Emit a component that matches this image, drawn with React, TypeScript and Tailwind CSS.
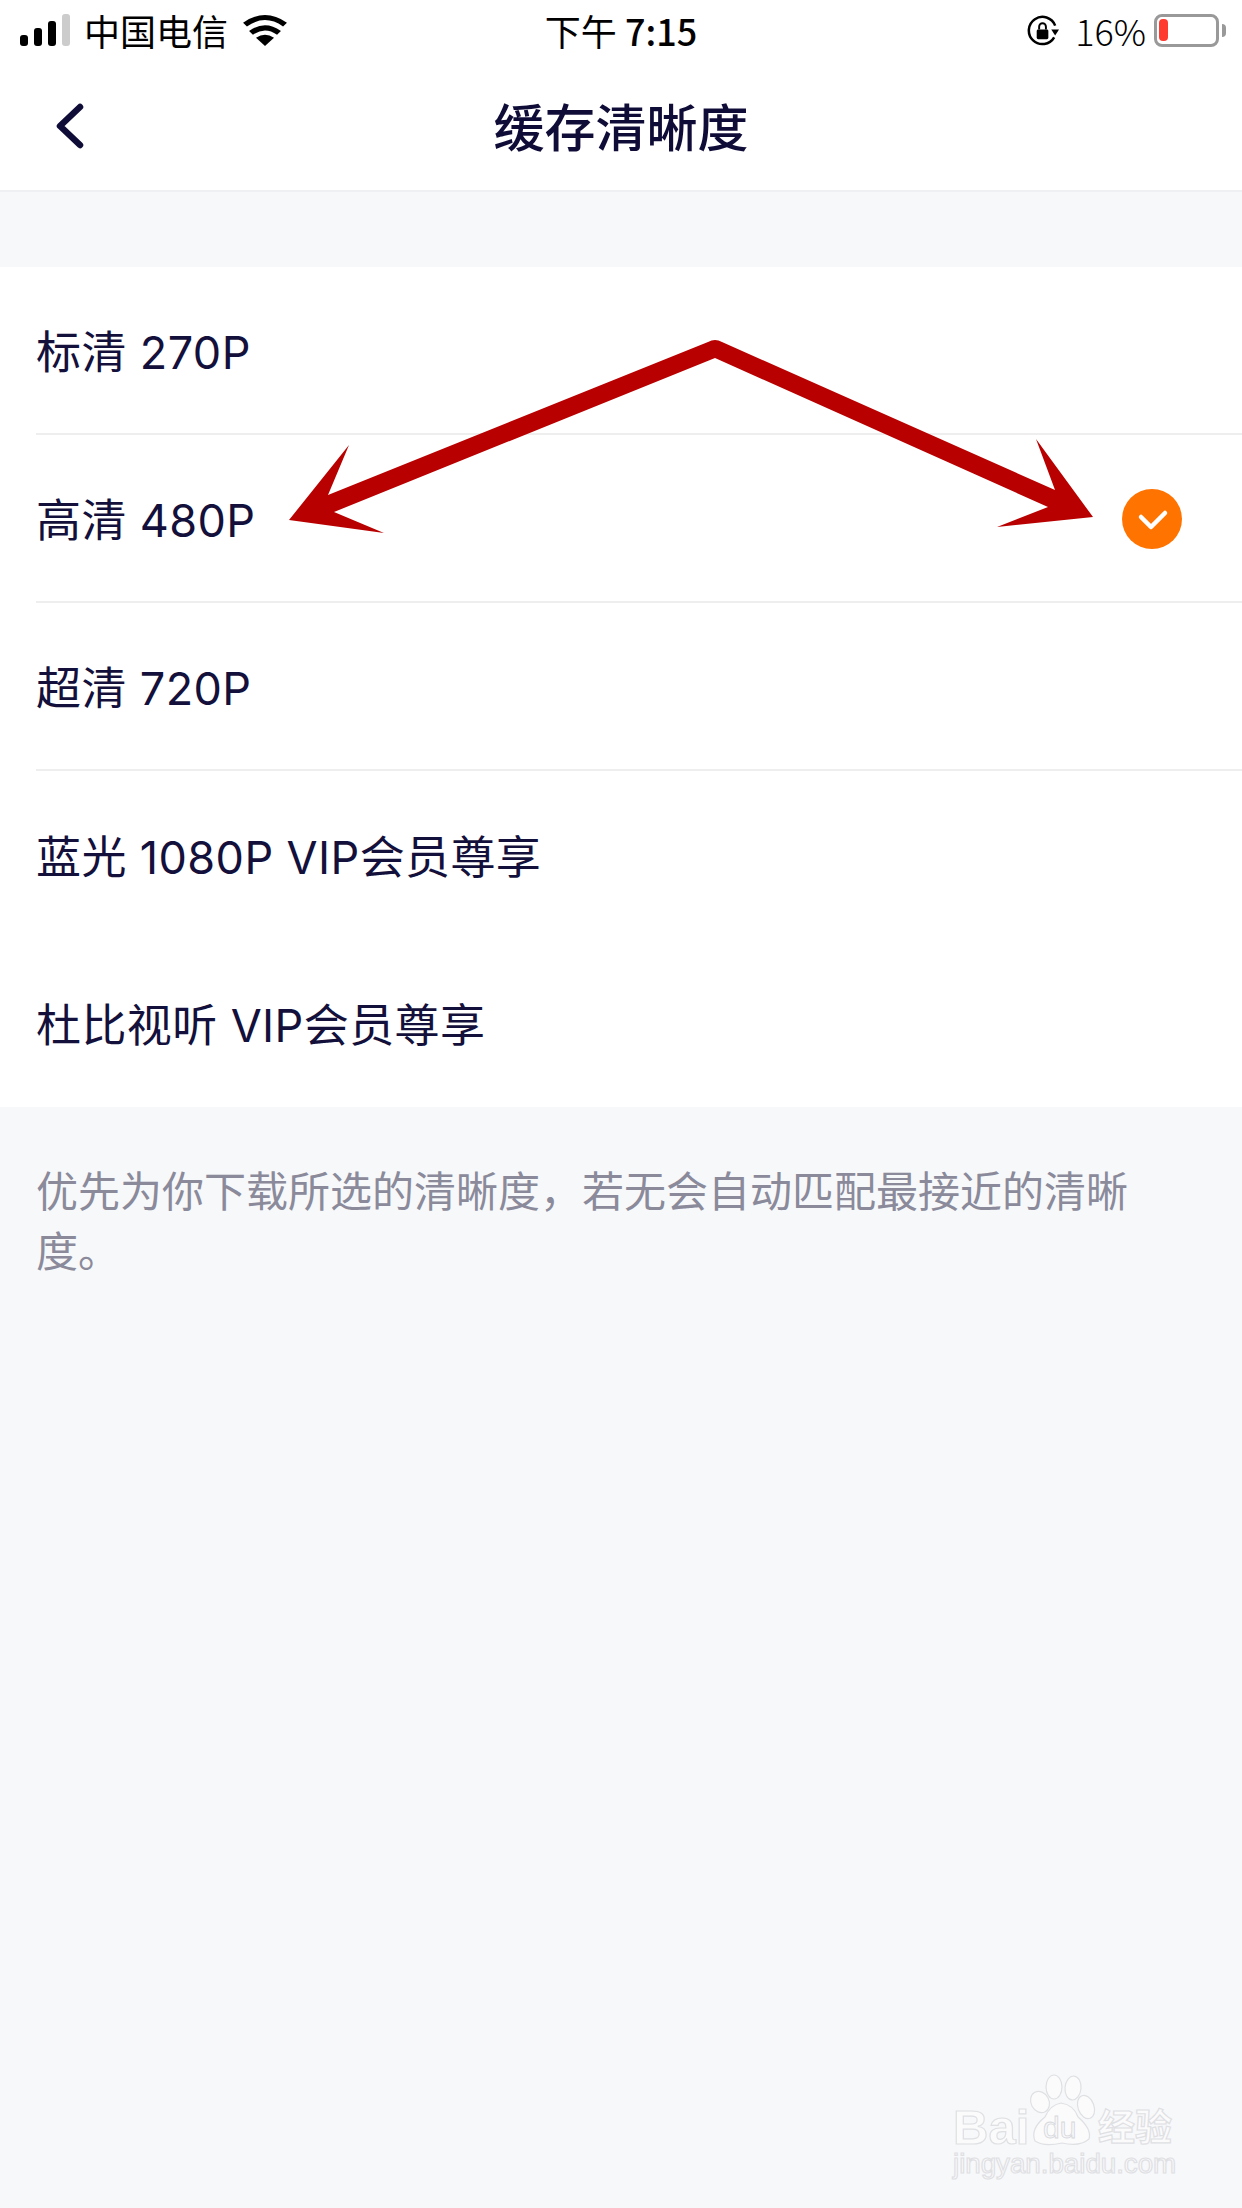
const options = [
  { label: "标清 270P" },
  { label: "高清 480P", selected: true },
  { label: "超清 720P" },
  { label: "蓝光 1080P VIP会员尊享", noLine: true },
  { label: "杜比视听 VIP会员尊享", noLine: true },
];

function StatusBar() {
  return (
    <div className="grid h-[60px] grid-cols-[1fr_auto_1fr] items-center text-black">
      <div className="flex items-center pl-[20px]">
        <svg width="51" height="32" viewBox="0 0 51 32">
          <rect x="0" y="21" width="8" height="11" rx="3" fill="#000" />
          <rect x="14" y="14" width="8" height="18" rx="3" fill="#000" />
          <rect x="28" y="7" width="8" height="25" rx="3" fill="#000" />
          <rect x="42" y="0" width="8" height="32" rx="3" fill="#ccc" />
        </svg>
        <span className="ml-[13px] text-[36px] leading-none">中国电信</span>
        <svg className="mb-[1px] ml-[14px]" width="46" height="33" viewBox="0 0 46 40" preserveAspectRatio="none">
          <path d="M23 40 L14 30 Q23 23 32 30 Z" fill="#000" />
          <path d="M9 24 Q23 12 37 24" fill="none" stroke="#000" strokeWidth="6" />
          <path d="M3 14 Q23 -3 43 14" fill="none" stroke="#000" strokeWidth="6" />
        </svg>
      </div>
      <div className="text-[36px] leading-none">
        下午 <span className="font-medium">7:15</span>
      </div>
      <div className="flex items-center justify-end pr-[16px]">
        <svg className="mt-[3px]" width="33" height="33" viewBox="0 0 34 34">
          <path d="M28 23 A14 14 0 1 1 29 11" fill="none" stroke="#000" strokeWidth="2.6" />
          <path d="M25 15 L33 15 L29 21 Z" fill="#000" />
          <rect x="10" y="15" width="12" height="10" rx="1.5" fill="#000" />
          <path d="M12.5 15 V12 A3.5 3.5 0 0 1 19.5 12 V15" fill="none" stroke="#000" strokeWidth="2" />
        </svg>
        <span className="ml-[15px] text-[36px] font-light leading-none">16%</span>
        <div className="ml-[8px] flex h-[33px] w-[65px] items-center rounded-[8px] border-[3px] border-[#999] pl-[2px]">
          <div className="h-[22px] w-[9px] rounded-[4px] bg-[#ff3b30]" />
        </div>
        <div className="ml-[3px] h-[13px] w-[4px] rounded-r-full bg-[#999]" />
      </div>
    </div>
  );
}

function NavBar() {
  return (
    <div className="grid h-[132px] grid-cols-[1fr_auto_1fr] items-center border-b-2 border-[#eff0f3]">
      <svg className="ml-[54px] mt-[2px]" width="30" height="46" viewBox="0 0 30 46">
        <path d="M26 4 L6 23 L26 42" fill="none" stroke="#100c38" strokeWidth="6.5" strokeLinecap="round" strokeLinejoin="round" />
      </svg>
      <div className="text-[51px] font-medium leading-none text-[#100c38]">缓存清晰度</div>
      <div />
    </div>
  );
}

function OptionRow({ label, selected, noLine }: { label: string; selected?: boolean; noLine?: boolean }) {
  return (
    <div className="pl-[36px]">
      <div className={"flex h-[168px] items-center justify-between pr-[60px] " + (noLine ? "" : "border-b-2 border-[#eeeeef]")}>
        <span className="pt-[5px] font-['Inter','Noto_Sans_CJK_SC',sans-serif] text-[45px] leading-none tracking-[0.4px] text-[#14103c]">{label}</span>
        {selected && (
          <svg className="mt-[2px]" width="60" height="60" viewBox="0 0 60 60">
            <circle cx="30" cy="30" r="30" fill="#ff7300" />
            <path d="M19 28 L29 38 L43 24" fill="none" stroke="#fff" strokeWidth="4.5" strokeLinecap="round" strokeLinejoin="round" />
          </svg>
        )}
      </div>
    </div>
  );
}

function Arrows() {
  return (
    <svg className="pointer-events-none absolute left-0 top-0" width="1242" height="600" viewBox="0 0 1242 600">
      <path
        d="M708 342 Q715 338 722 342 L1055 490 L1036 439 L1093 517 L997 527 L1048 507 L715 358 L334 512 L384 533 L289 520 L349 445 L328 495 Z"
        fill="#b90000"
      />
    </svg>
  );
}

function Watermark() {
  const edge = { fill: "#fbfbfc", stroke: "#dfe0e3", strokeWidth: 1.2 };
  return (
    <svg className="pointer-events-none absolute left-[940px] top-[2065px]" width="250" height="125" viewBox="0 0 250 125">
      <ellipse cx="114" cy="22" rx="8" ry="12" {...edge} />
      <ellipse cx="133" cy="23" rx="8" ry="12" transform="rotate(5 133 23)" {...edge} />
      <ellipse cx="100" cy="37" rx="9" ry="11" transform="rotate(-28 100 37)" {...edge} />
      <ellipse cx="146" cy="42" rx="8" ry="12" transform="rotate(-20 146 42)" {...edge} />
      <path d="M121 38 Q134 40 138 52 Q152 64 149 74 Q140 82 122 78 Q104 82 95 76 Q90 64 105 52 Q110 40 121 38 Z" {...edge} />
      <text x="13" y="79" fontFamily="Liberation Sans, sans-serif" fontSize="49" fontWeight="700" {...edge}>Bai</text>
      <text x="103" y="73" fontFamily="Liberation Sans, sans-serif" fontSize="30" fill="#f6f7f9" stroke="#d6d7db" strokeWidth="0.8">du</text>
      <text x="158" y="76" fontFamily="Noto Sans CJK SC, sans-serif" fontSize="37" fontWeight="700" {...edge}>经验</text>
      <text x="13" y="108" fontFamily="Liberation Sans, sans-serif" fontSize="27.7" {...edge}>jingyan.baidu.com</text>
    </svg>
  );
}

export default function App() {
  return (
    <div className="relative h-[2208px] w-[1242px] overflow-hidden bg-[#f7f8fa] font-['Noto_Sans_CJK_SC','Noto_Sans',sans-serif]">
      <div className="bg-white">
        <StatusBar />
        <NavBar />
      </div>
      <div className="mt-[75px] bg-white">
        {options.map((o) => (
          <OptionRow key={o.label} label={o.label} selected={o.selected} noLine={o.noLine} />
        ))}
      </div>
      <p className="px-[36px] pt-[52px] text-[42px] leading-[60px] text-[#8a8a9b]">
        优先为你下载所选的清晰度，若无会自动匹配最接近的清晰度。
      </p>
      <Arrows />
      <Watermark />
    </div>
  );
}
